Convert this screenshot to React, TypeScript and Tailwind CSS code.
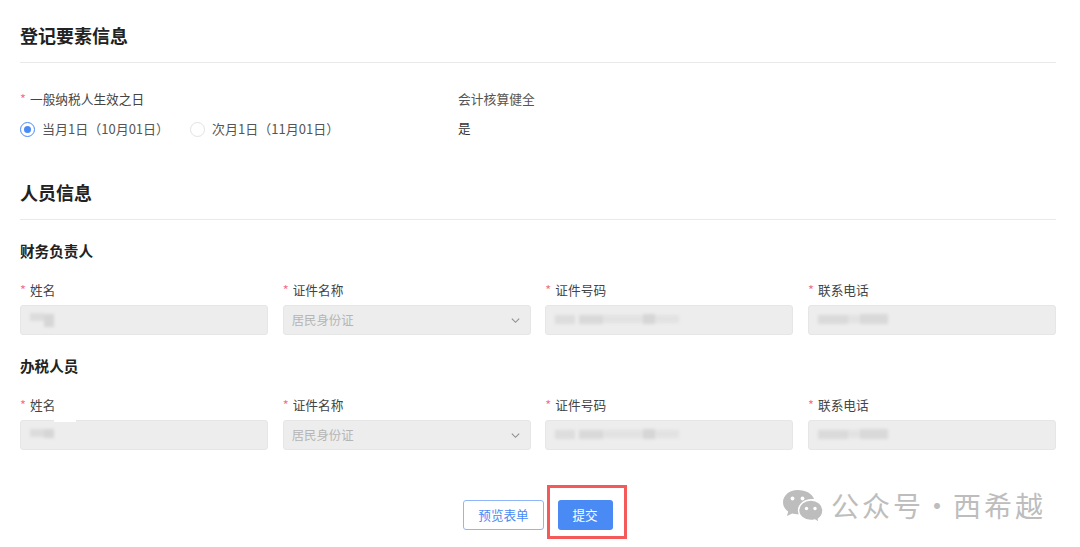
const font = { fontFamily: '"Noto Sans CJK SC", "Liberation Sans", sans-serif' };

type Blur = { w: number; h: number; x: number; y: number; shade: string };

function RequiredLabel({ text }: { text: string }) {
  return (
    <div className="flex h-[18px] items-center text-[12.7px] leading-[18px] text-[#444]">
      <span className="mr-[5px] w-[5px] text-[#f56c8a]">*</span>
      {text}
    </div>
  );
}

// 打码区域
function Mosaic({ parts }: { parts: Blur[] }) {
  return (
    <div className="flex h-full items-center gap-0 pl-[9px] blur-[1.5px]">
      {parts.map((p, i) => (
        <span
          key={i}
          className={`block ${p.shade}`}
          style={{ width: p.w, height: p.h, marginTop: p.y, marginLeft: p.x }}
        />
      ))}
    </div>
  );
}

const nameMask: Blur[] = [
  { w: 14, h: 8, x: 0, y: -6, shade: 'bg-[#dcdcdc]' },
  { w: 10, h: 13, x: 0, y: 0, shade: 'bg-[#d6d6d6]' },
];
const nameMaskShort: Blur[] = [
  { w: 14, h: 8, x: 0, y: -5, shade: 'bg-[#dcdcdc]' },
  { w: 10, h: 9, x: 0, y: -3, shade: 'bg-[#d6d6d6]' },
];
const idMask: Blur[] = [
  { w: 20, h: 9, x: 0, y: -2, shade: 'bg-[#dddddd]' },
  { w: 24, h: 9, x: 4, y: -2, shade: 'bg-[#d9d9d9]' },
  { w: 40, h: 8, x: 0, y: -2, shade: 'bg-[#e2e2e2]' },
  { w: 12, h: 10, x: 0, y: -2, shade: 'bg-[#d6d6d6]' },
  { w: 24, h: 8, x: 0, y: -2, shade: 'bg-[#e2e2e2]' },
];
const phoneMask: Blur[] = [
  { w: 30, h: 9, x: 0, y: -2, shade: 'bg-[#dadada]' },
  { w: 12, h: 8, x: 0, y: -2, shade: 'bg-[#e2e2e2]' },
  { w: 28, h: 10, x: 0, y: -2, shade: 'bg-[#d9d9d9]' },
];

function Box({ children }: { children?: React.ReactNode }) {
  return (
    <div className="relative mt-[6px] h-[30px] rounded-[3px] border border-[#e6e6e6] bg-[#ededed]">{children}</div>
  );
}

function PersonRow({ title, erased }: { title: string; erased?: boolean }) {
  return (
    <section>
      <h3 className="text-[14.6px] leading-[22px] font-bold text-[#222]">{title}</h3>
      <div className="mt-[19px] grid grid-cols-4 gap-x-[14.67px]">
        <div>
          <RequiredLabel text="姓名" />
          <Box>
            {/* 涂抹留下的白边 */}
            {erased && <span className="absolute -top-px left-[33px] h-[2px] w-[22px] bg-white" />}
            <Mosaic parts={erased ? nameMaskShort : nameMask} />
          </Box>
        </div>
        <div>
          <RequiredLabel text="证件名称" />
          <Box>
            <div className="flex h-full items-center justify-between pr-[9px] pl-[8px] text-[12.4px] text-[#b5b5b5]">
              居民身份证
              <svg width="11" height="11" viewBox="0 0 12 12" fill="none" stroke="#8f8f8f" strokeWidth="1.2">
                <path d="M2 4l4 4 4-4" />
              </svg>
            </div>
          </Box>
        </div>
        <div>
          <RequiredLabel text="证件号码" />
          <Box>
            <Mosaic parts={idMask} />
          </Box>
        </div>
        <div>
          <RequiredLabel text="联系电话" />
          <Box>
            <Mosaic parts={phoneMask} />
          </Box>
        </div>
      </div>
    </section>
  );
}

function Radio({ checked, text }: { checked?: boolean; text: string }) {
  return (
    <label className="flex items-center gap-[7px] text-[13px] text-[#555]">
      <span
        className={`flex h-[15px] w-[15px] items-center justify-center rounded-full border bg-white ${
          checked ? 'border-[#4a8af5]' : 'border-[#e2e2e2]'
        }`}
      >
        {checked && <span className="h-[7px] w-[7px] rounded-full bg-[#4a8af5]" />}
      </span>
      {text}
    </label>
  );
}

export default function App() {
  return (
    <div className="relative h-[547px] w-[1080px] overflow-hidden bg-white" style={font}>
      <div className="w-[1056px] pt-[22px] pl-[20px]">
        <h2 className="border-b border-[#e9e9e9] pb-[13px] text-[18px] leading-[27px] font-bold text-[#222]">
          登记要素信息
        </h2>

        <div className="mt-[27px] flex">
          <div className="w-[438px]">
            <RequiredLabel text="一般纳税人生效之日" />
            <div className="mt-[11px] flex h-[20px] items-center gap-[21px]">
              <Radio checked text="当月1日（10月01日）" />
              <Radio text="次月1日（11月01日）" />
            </div>
          </div>
          <div>
            <div className="h-[18px] text-[12.8px] leading-[18px] text-[#555]">会计核算健全</div>
            <div className="mt-[10px] text-[12.6px] leading-[20px] text-[#333]">是</div>
          </div>
        </div>

        <h2 className="mt-[40px] border-b border-[#e9e9e9] pb-[13px] text-[18px] leading-[27px] font-bold text-[#222]">
          人员信息
        </h2>

        <div className="mt-[20px] flex flex-col gap-[20px]">
          <PersonRow title="财务负责人" />
          <PersonRow title="办税人员" erased />
        </div>

        <div className="mt-[35px] flex items-end justify-center pl-[14px]">
          <button className="mb-[9px] h-[30px] w-[81px] rounded-[3px] border border-[#8fb6f8] bg-white text-[12.6px] text-[#4a8af5]">
            预览表单
          </button>
          {/* 红框标注 */}
          <div className="ml-[3px] flex h-[54px] w-[80px] items-center justify-center border-[3px] border-[#f55a5a] pt-[6px] pr-[4px]">
            <button className="h-[30px] w-[55px] rounded-[3px] bg-[#4a8af5] text-[12.6px] text-white">提交</button>
          </div>
        </div>
      </div>

      {/* 水印 */}
      <div className="absolute top-[485px] left-[782px] flex items-center text-[28px] leading-[38px] tracking-[3px] text-[#bdbdbd]">
        <svg className="mt-[4px] mr-[7px]" width="42" height="36" viewBox="0 0 42 36">
          <path d="M15.5 1C7.5 1 1 6.5 1 13.2c0 3.8 2 7.1 5.2 9.4L5 27l5.2-2.6c1.7.5 3.4.8 5.3.8 1 0 1.9-.1 2.8-.3-.4-1.2-.6-2.4-.6-3.6C17.7 15 23.7 10 31 10c.3 0 .7 0 1 .1C30.6 4.8 23.800 1 15.500 1z" fill="#bdbdbd" />
          <path d="M41 21.300C41 15.600 35.500 11 28.800 11s-12.200 4.600-12.200 10.300 5.500 10.300 12.200 10.300c1.400 0 2.800-.2 4.100-.6L37.500 34l-1.100-4c2.800-2 4.600-5.100 4.600-8.700z" fill="#bdbdbd" stroke="#fff" strokeWidth="1.500" />
          <circle cx="10.500" cy="9.500" r="1.900" fill="#fff" />
          <circle cx="20.500" cy="9.500" r="1.900" fill="#fff" />
          <circle cx="24.500" cy="19.500" r="1.700" fill="#fff" />
          <circle cx="33" cy="19.500" r="1.700" fill="#fff" />
        </svg>
        <span>公众号</span>
        <span className="-mx-[1px]">·</span>
        <span>西希越</span>
      </div>
    </div>
  );
}
